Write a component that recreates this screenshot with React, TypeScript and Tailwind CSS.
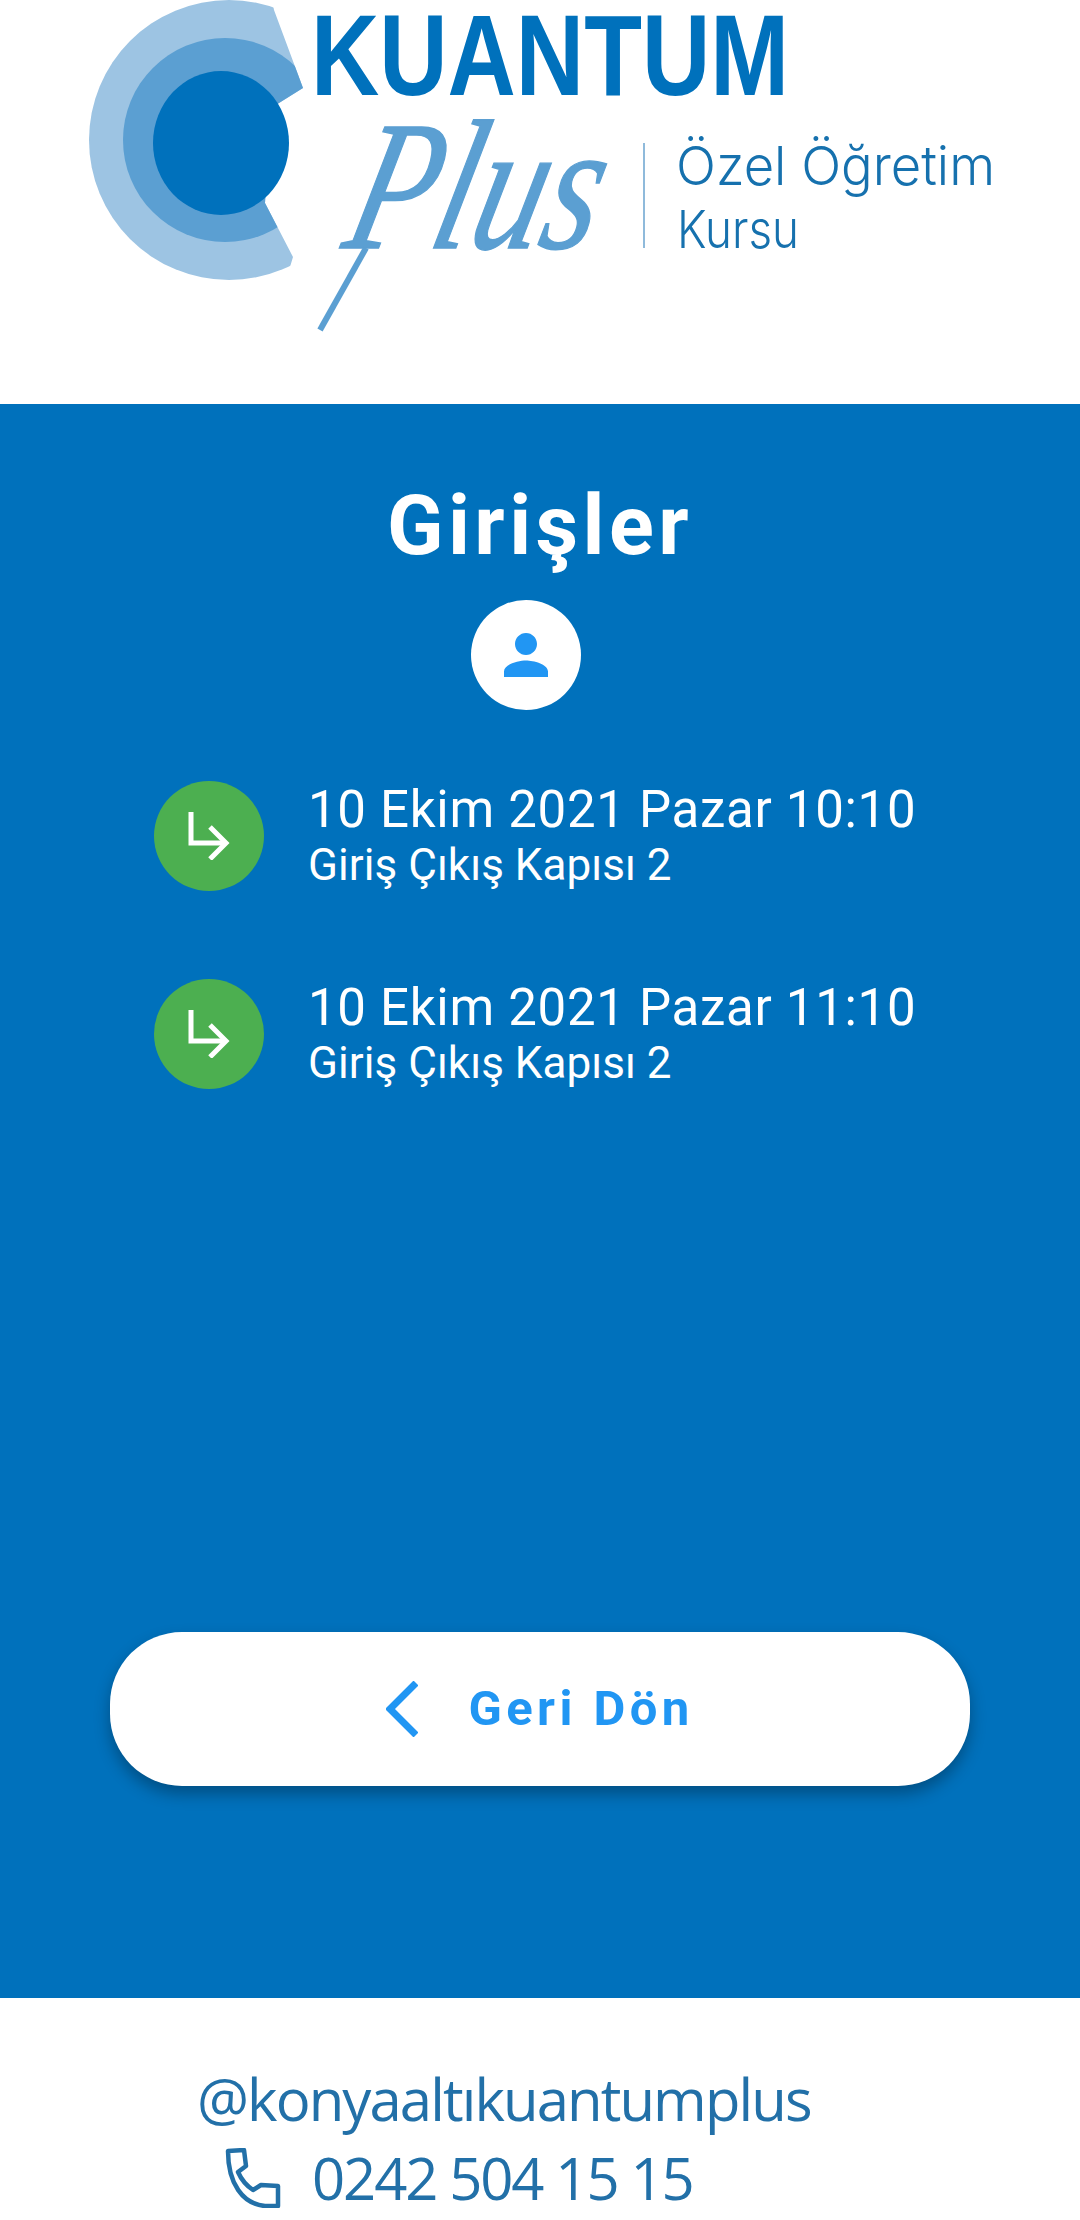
const ENTRIES = [
  { time: '10 Ekim 2021 Pazar 10:10', door: 'Giriş Çıkış Kapısı 2' },
  { time: '10 Ekim 2021 Pazar 11:10', door: 'Giriş Çıkış Kapısı 2' },
];

function Logo() {
  return (
    <svg viewBox="0 0 1080 404" className="block h-[404px] w-full">
      <defs>
        <clipPath id="logo-cut">
          <path d="M60 -10H270L274 10L303 88L271 108L265 203L293 257L280 300H60Z" />
        </clipPath>
      </defs>
      <g clipPath="url(#logo-cut)">
        <circle cx="229" cy="140" r="140" fill="#9dc4e3" />
        <circle cx="225" cy="140" r="102" fill="#5b9fd2" />
      </g>
      <ellipse cx="221" cy="143" rx="68" ry="72" fill="#0071bc" />
      <text x="311" y="95" fontFamily="'Liberation Sans', sans-serif" fontWeight="700" fontSize="115" textLength="478" lengthAdjust="spacingAndGlyphs" fill="#0071bc">
        KUANTUM
      </text>
      <text transform="translate(340 248) skewX(-14)" fontFamily="'Liberation Serif', serif" fontStyle="italic" fontSize="185" textLength="250" lengthAdjust="spacingAndGlyphs" fill="#5b9fd2" stroke="#5b9fd2" strokeWidth="1.5">
        Plus
      </text>
      <path d="M366 248L320 330" stroke="#5b9fd2" strokeWidth="6" fill="none" />
      <path d="M644 143V248" stroke="#6aa3cf" strokeWidth="1.5" />
      <text x="676" y="185" fontFamily="Inter, sans-serif" fontWeight="300" fontSize="54" textLength="319" lengthAdjust="spacingAndGlyphs" fill="#1671ae">
        Özel Öğretim
      </text>
      <text x="677" y="248" fontFamily="Inter, sans-serif" fontWeight="300" fontSize="52" textLength="122" lengthAdjust="spacingAndGlyphs" fill="#1671ae">
        Kursu
      </text>
    </svg>
  );
}

function EntryRow({ time, door }: { time: string; door: string }) {
  return (
    <div className="flex items-center gap-[45px]">
      <div className="flex h-[110px] w-[110px] shrink-0 items-center justify-center rounded-full bg-[#4caf50]">
        <svg width="42" height="48" viewBox="0 0 42 48" fill="none" stroke="#fff" strokeWidth="5">
          <path d="M3 0V31H38" />
          <path d="M22 15L38 31L22 47" />
        </svg>
      </div>
      <div className="-mt-[3px] -ml-[1px] flex flex-col text-white">
        <span className="text-[51px] leading-[60px] tracking-[0.7px]">{time}</span>
        <span className="text-[44px] leading-[50px] tracking-[0.05px]">{door}</span>
      </div>
    </div>
  );
}

export default function App() {
  return (
    <div className="flex h-[2220px] w-[1080px] flex-col overflow-hidden bg-white font-['Roboto',sans-serif]">
      <Logo />
      <main className="flex h-[1594px] flex-col bg-[#0071bc]">
        <h1 className="mt-[73px] text-center text-[83px] leading-[97px] font-bold tracking-[4.4px] text-white">Girişler</h1>
        <div className="mt-[26px] ml-[471px] flex h-[110px] w-[110px] items-center justify-center rounded-full bg-white">
          <svg width="66" height="66" viewBox="0 0 24 24" fill="#2196f3">
            <path d="M12 12c2.21 0 4-1.79 4-4s-1.79-4-4-4-4 1.79-4 4 1.79 4 4 4zm0 2c-2.67 0-8 1.34-8 4v2h16v-2c0-2.66-5.33-4-8-4z" />
          </svg>
        </div>
        <div className="mt-[71px] ml-[154px] flex flex-col gap-[88px]">
          {ENTRIES.map((e) => (
            <EntryRow key={e.time} time={e.time} door={e.door} />
          ))}
        </div>
        <button className="mx-[110px] mt-[543px] flex h-[154px] w-[860px] items-center justify-center gap-[50px] rounded-[72px] bg-white shadow-[0_8px_16px_rgba(0,0,0,0.3)]">
          <svg width="32" height="56" viewBox="0 0 32 56" fill="none" stroke="#2196f3" strokeWidth="7">
            <path d="M30 2L4 28L30 54" />
          </svg>
          <span className="text-[49px] font-bold tracking-[4.4px] text-[#2196f3]">Geri Dön</span>
        </button>
      </main>
      <footer className="flex flex-1 flex-col font-['Open_Sans',sans-serif] text-[#2270a8]">
        <span className="mt-[66px] ml-[197px] text-[58px] leading-[70px] tracking-[-1.9px]">@konyaaltıkuantumplus</span>
        <div className="mt-[9px] ml-[225px] flex items-center gap-[31px]">
          <svg width="56" height="60" viewBox="0 0 56 60" fill="none" stroke="#2270a8" strokeWidth="4.5" strokeLinejoin="round">
            <path d="M3 3L19 2L21 18L13 24C17 33 22 38 28 42L36 37L53 38L53 58L40 58C18 56 3 36 3 3Z" />
          </svg>
          <span className="text-[58px] leading-[70px] tracking-[-2.1px]">0242 504 15 15</span>
        </div>
      </footer>
    </div>
  );
}
